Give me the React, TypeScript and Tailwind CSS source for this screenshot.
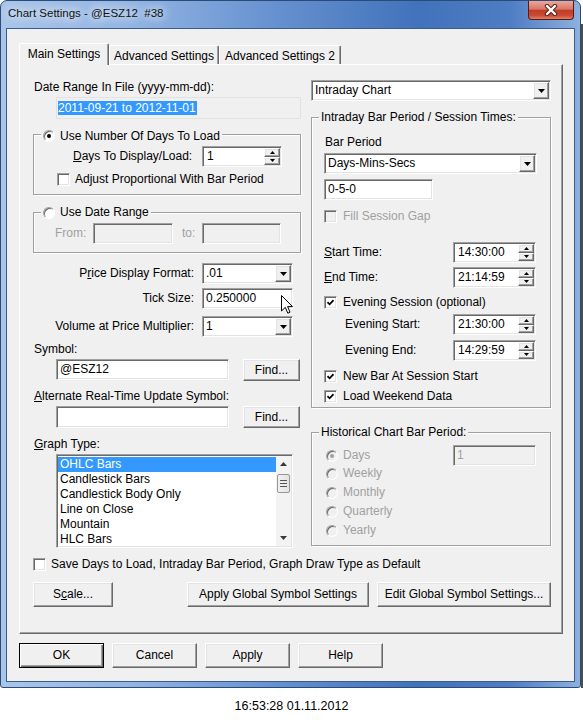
import React from 'react';

// classic 3D edges
const sunken =
    'border border-t-[#a0a0a0] border-l-[#a0a0a0] border-r-white border-b-white shadow-[inset_1px_1px_0_#696969,inset_-1px_-1px_0_#e3e3e3]';
const raised =
    'border border-t-white border-l-white border-r-[#696969] border-b-[#696969] shadow-[inset_-1px_-1px_0_#a0a0a0,inset_1px_1px_0_#e3e3e3]';

const Tri = ({ up, w = 7, h = 4, color = '#000' }: { up?: boolean; w?: number; h?: number; color?: string }) => (
    <svg width={w} height={h} viewBox={`0 0 ${w} ${h}`}>
        <path d={up ? `M0 ${h}H${w}L${w / 2} 0Z` : `M0 0H${w}L${w / 2} ${h}Z`} fill={color} />
    </svg>
);

const Select = ({ value, className = '' }: { value: string; className?: string }) => (
    <div className={`${sunken} bg-white h-[21px] flex p-[1px] ${className}`}>
        <div className="flex-1 pl-[2px] flex items-center">{value}</div>
        <div className={`${raised} w-[16px] bg-[#f0f0f0] flex items-center justify-center`}>
            <Tri />
        </div>
    </div>
);

const Spin = ({ value, className = '' }: { value: string; className?: string }) => (
    <div className={`${sunken} bg-white h-[21px] flex p-[1px] ${className}`}>
        <div className="flex-1 pl-[3px] flex items-center">{value}</div>
        <div className="w-[16px] flex flex-col">
            <div className={`${raised} flex-1 bg-[#f0f0f0] flex items-center justify-center`}>
                <Tri up w={5} h={3} />
            </div>
            <div className={`${raised} flex-1 bg-[#f0f0f0] flex items-center justify-center`}>
                <Tri w={5} h={3} />
            </div>
        </div>
    </div>
);

const Edit = ({
    value = '',
    disabled,
    tall,
    className = '',
}: {
    value?: string;
    disabled?: boolean;
    tall?: boolean;
    className?: string;
}) => (
    <div
        className={`${sunken} ${tall ? 'h-[22px]' : 'h-[21px]'} flex items-center pl-[3px] ${disabled ? 'bg-[#f0f0f0] text-[#a0a0a0]' : 'bg-white'} ${className}`}
    >
        {value}
    </div>
);

const Check = ({ checked, disabled }: { checked?: boolean; disabled?: boolean }) => (
    <span
        className={`${sunken} w-[13px] h-[13px] shrink-0 flex items-center justify-center ${disabled ? 'bg-[#f0f0f0]' : 'bg-white'}`}
    >
        {checked && (
            <svg width="7" height="7" viewBox="0 0 7 7">
                <path d="M0.5 3.2L2.6 5.3L6.5 1.2" stroke="#000" strokeWidth="1.7" fill="none" />
            </svg>
        )}
    </span>
);

const Radio = ({ checked, disabled }: { checked?: boolean; disabled?: boolean }) => (
    <span
        className={`w-[12px] h-[12px] rounded-full shrink-0 flex items-center justify-center border border-t-[#a0a0a0] border-l-[#a0a0a0] border-r-white border-b-white shadow-[inset_1px_1px_0_#696969] ${disabled ? 'bg-[#f0f0f0]' : 'bg-white'}`}
    >
        {checked && <span className={`w-[4px] h-[4px] rounded-full ${disabled ? 'bg-[#a0a0a0]' : 'bg-black'}`} />}
    </span>
);

const Btn = ({ children, small, className = '' }: { children: React.ReactNode; small?: boolean; className?: string }) => (
    <div
        className={`${raised} bg-[#f0f0f0] ${small ? 'h-[22px]' : 'h-[25px]'} flex items-center justify-center ${className}`}
    >
        {children}
    </div>
);

const Group = ({ legend, className = '', children }: { legend: React.ReactNode; className?: string; children: React.ReactNode }) => (
    <fieldset className={`border border-[#a0a0a0] shadow-[inset_1px_1px_0_#fff,1px_1px_0_#fff] ${className}`}>
        <legend className="ml-[7px] px-[2px] bg-[#f0f0f0] h-[15px] leading-[15px]">
            <span className="inline-flex items-center gap-[5px]">{legend}</span>
        </legend>
        {children}
    </fieldset>
);

const CheckRow = ({ label, checked, disabled, gap = 'gap-[5px]', className = '' }: { label: string; checked?: boolean; disabled?: boolean; gap?: string; className?: string }) => (
    <div className={`h-[15px] flex items-center ${gap} ${className}`}>
        <Check checked={checked} disabled={disabled} />
        <span className={disabled ? 'text-[#a0a0a0]' : ''}>{label}</span>
    </div>
);

const RadioRow = ({ label, checked, className = '' }: { label: string; checked?: boolean; className?: string }) => (
    <div className={`h-[15px] flex items-center gap-[5px] text-[#a0a0a0] ${className}`}>
        <Radio checked={checked} disabled />
        <span>{label}</span>
    </div>
);

const graphTypes = ['OHLC Bars', 'Candlestick Bars', 'Candlestick Body Only', 'Line on Close', 'Mountain', 'HLC Bars'];

const App = () => {
    return (
        <div className="relative w-[583px] h-[723px] bg-white overflow-hidden font-['Liberation_Sans',Arial,sans-serif] text-[12px] leading-[15px] text-black">
            <div className="flex">
                {/* window frame */}
                <div className="w-[581px] h-[688px] rounded-t-[7px] rounded-b-[3px] border border-[#2c4a76] bg-[linear-gradient(90deg,#a9c5ea_0%,#93b5e3_22%,#6590cf_48%,#4272bb_72%,#4f7dc3_88%,#8db0df_100%)] flex flex-col">
                    <div className="h-[27px] flex items-start">
                        <div className="pl-[7px] pt-[5px] text-[11.5px] text-[#111] [text-shadow:0_0_8px_#fff,0_0_12px_#fff]">
                            Chart Settings - @ESZ12&nbsp;&nbsp;#38
                        </div>
                        <div className="flex-1" />
                        <div className="mr-[6px] w-[46px] h-[19px] rounded-b-[4px] border border-t-0 border-[#5c1a12] bg-[linear-gradient(#eaa89c,#d87867_45%,#c13d27_52%,#c94a33_80%,#e08366)] flex items-center justify-center">
                            <svg width="14" height="12" viewBox="0 0 14 12">
                                <path d="M3 2L11 10M11 2L3 10" stroke="#5a2218" strokeWidth="4.4" strokeLinecap="round" />
                                <path d="M3 2L11 10M11 2L3 10" stroke="#fff" strokeWidth="2.4" strokeLinecap="round" />
                            </svg>
                        </div>
                    </div>
                    {/* client area */}
                    <div className="mx-[5px] h-[654px] bg-[#f0f0f0] border border-[#3b5c8c] flex flex-col">
                        {/* tabs */}
                        <div className="mt-[14px] ml-[12px] h-[21px] flex items-end">
                            <div className="relative z-10 -mb-[1px] w-[90px] h-[22px] bg-[#f0f0f0] rounded-t-[2px] border border-b-0 border-t-white border-l-white border-r-[#696969] shadow-[inset_-1px_0_0_#a0a0a0] flex justify-center pt-[3px]">
                                Main Settings
                            </div>
                            <div className="w-[110px] h-[19px] rounded-t-[2px] border border-b-0 border-t-white border-l-white border-r-[#696969] shadow-[inset_-1px_0_0_#a0a0a0] flex justify-center pt-[3px]">
                                Advanced Settings
                            </div>
                            <div className="w-[122px] h-[19px] rounded-t-[2px] border border-b-0 border-t-white border-l-white border-r-[#696969] shadow-[inset_-1px_0_0_#a0a0a0] flex justify-center pt-[3px]">
                                Advanced Settings 2
                            </div>
                        </div>
                        {/* tab page */}
                        <div className="ml-[12px] w-[544px] h-[570px] border border-t-white border-l-white border-r-[#696969] border-b-[#696969] shadow-[inset_-1px_-1px_0_#a0a0a0] pl-[13px] pt-[15px]">
                            <div className="flex gap-[10px] items-start">
                                {/* left column */}
                                <div className="w-[268px] flex flex-col">
                                    <div className="ml-[1px] h-[15px]">Date Range In File (yyyy-mm-dd):</div>
                                    <div className="mt-[2px] ml-[23px] w-[245px] h-[22px] border border-[#e2e2e2] bg-[#f0f0f0] flex items-center pl-[1px]">
                                        <span className="bg-[#3399ff] text-white leading-[14px] pr-[1px]">2011-09-21 to 2012-11-01</span>
                                    </div>

                                    <Group
                                        className="mt-[8px] w-[268px] pb-[7px]"
                                        legend={
                                            <>
                                                <Radio checked />
                                                Use Number Of Days To Load
                                            </>
                                        }
                                    >
                                        <div className="mt-[4px] h-[21px] flex items-center">
                                            <span className="ml-[39px] w-[129px]">
                                                <u>D</u>ays To Display/Load:
                                            </span>
                                            <Spin value="1" className="w-[80px]" />
                                        </div>
                                        <CheckRow className="mt-[5px] ml-[23px]" label="Adjust Proportional With Bar Period" />
                                    </Group>

                                    <Group
                                        className="mt-[10px] w-[268px] pb-[8px]"
                                        legend={
                                            <>
                                                <Radio />
                                                Use Date Range
                                            </>
                                        }
                                    >
                                        <div className="mt-[3px] h-[21px] flex items-center text-[#a0a0a0]">
                                            <span className="ml-[21px] w-[38px]">From:</span>
                                            <Edit disabled className="w-[80px]" />
                                            <span className="ml-[9px] w-[20px]">to:</span>
                                            <Edit disabled className="w-[79px]" />
                                        </div>
                                    </Group>

                                    <div className="mt-[10px] h-[21px] flex items-center">
                                        <span className="w-[161px] text-right">
                                            P<u>r</u>ice Display Format:
                                        </span>
                                        <Select value=".01" className="ml-[8px] w-[91px]" />
                                    </div>
                                    <div className="mt-[4px] h-[21px] flex items-center">
                                        <span className="w-[161px] text-right">Tick Size:</span>
                                        <Edit value="0.250000" className="ml-[8px] w-[91px]" />
                                    </div>
                                    <div className="mt-[7px] h-[21px] flex items-center">
                                        <span className="w-[161px] text-right">Volume at Price Multiplier:</span>
                                        <Select value="1" className="ml-[8px] w-[91px]" />
                                    </div>

                                    <div className="mt-[5px] ml-[1px] h-[15px]">Symbol:</div>
                                    <div className="mt-[2px] flex items-start">
                                        <Edit value="@ESZ12" className="ml-[23px] w-[173px]" />
                                        <Btn small className="ml-[14px] w-[57px]">
                                            Find...
                                        </Btn>
                                    </div>

                                    <div className="mt-[8px] ml-[1px] h-[15px]">
                                        <u>A</u>lternate Real-Time Update Symbol:
                                    </div>
                                    <div className="mt-[2px] flex items-start">
                                        <Edit tall className="ml-[23px] w-[173px]" />
                                        <Btn small className="ml-[14px] w-[57px]">
                                            Find...
                                        </Btn>
                                    </div>

                                    <div className="mt-[9px] ml-[1px] h-[15px]">
                                        <u>G</u>raph Type:
                                    </div>
                                    <div className={`${sunken} mt-[2px] ml-[23px] w-[237px] h-[94px] bg-white flex p-[1px]`}>
                                        <div className="flex-1 pt-[1px]">
                                            {graphTypes.map((t, i) => (
                                                <div
                                                    key={t}
                                                    className={`h-[15px] pl-[2px] ${i === 0 ? 'bg-[#3399ff] text-white' : ''}`}
                                                >
                                                    {t}
                                                </div>
                                            ))}
                                        </div>
                                        {/* scrollbar */}
                                        <div className="w-[15px] bg-[#f3f3f3] flex flex-col items-center">
                                            <div className="h-[16px] flex items-center justify-center">
                                                <Tri up w={7} h={4} color="#3a3a3a" />
                                            </div>
                                            <div className="mt-[2px] w-[13px] h-[19px] rounded-[2px] border border-[#979797] bg-[linear-gradient(90deg,#f2f2f2,#e2e2e2)] flex flex-col items-center justify-center gap-[2px]">
                                                <span className="w-[7px] h-[1px] bg-[#555]" />
                                                <span className="w-[7px] h-[1px] bg-[#555]" />
                                                <span className="w-[7px] h-[1px] bg-[#555]" />
                                            </div>
                                            <div className="flex-1" />
                                            <div className="h-[16px] flex items-center justify-center">
                                                <Tri w={7} h={4} color="#3a3a3a" />
                                            </div>
                                        </div>
                                    </div>
                                </div>

                                {/* right column */}
                                <div className="w-[240px] flex flex-col">
                                    <Select value="Intraday Chart" className="w-[240px]" />

                                    <Group className="mt-[9px] w-[240px] pb-[3px]" legend="Intraday Bar Period / Session Times:">
                                        <div className="mt-[10px] ml-[13px] h-[15px]">Bar Period</div>
                                        <Select value="Days-Mins-Secs" className="mt-[3px] ml-[12px] w-[213px]" />
                                        <Edit value="0-5-0" className="mt-[5px] ml-[12px] w-[109px]" />
                                        <CheckRow className="mt-[9px] ml-[12px]" gap="gap-[6px]" label="Fill Session Gap" disabled />
                                        <div className="mt-[18px] h-[21px] flex items-center">
                                            <span className="ml-[12px] w-[129px]">
                                                <u>S</u>tart Time:
                                            </span>
                                            <Spin value="14:30:00" className="w-[83px]" />
                                        </div>
                                        <div className="mt-[4px] h-[21px] flex items-center">
                                            <span className="ml-[12px] w-[129px]">
                                                <u>E</u>nd Time:
                                            </span>
                                            <Spin value="21:14:59" className="w-[83px]" />
                                        </div>
                                        <CheckRow className="mt-[7px] ml-[12px]" gap="gap-[6px]" label="Evening Session (optional)" checked />
                                        <div className="mt-[4px] h-[21px] flex items-center">
                                            <span className="ml-[33px] w-[108px]">Evening Start:</span>
                                            <Spin value="21:30:00" className="w-[83px]" />
                                        </div>
                                        <div className="mt-[5px] h-[21px] flex items-center">
                                            <span className="ml-[33px] w-[108px]">Evening End:</span>
                                            <Spin value="14:29:59" className="w-[83px]" />
                                        </div>
                                        <CheckRow className="mt-[8px] ml-[12px]" gap="gap-[6px]" label="New Bar At Session Start" checked />
                                        <CheckRow className="mt-[5px] ml-[12px]" gap="gap-[6px]" label="Load Weekend Data" checked />
                                    </Group>

                                    <Group className="mt-[17px] w-[240px] pb-[7px]" legend="Historical Chart Bar Period:">
                                        <div className="mt-[5px] h-[21px] flex items-center">
                                            <div className="w-[141px] pl-[14px]">
                                                <RadioRow label="Days" checked />
                                            </div>
                                            <Edit value="1" disabled className="w-[83px]" />
                                        </div>
                                        <RadioRow className="ml-[14px]" label="Weekly" />
                                        <RadioRow className="mt-[4px] ml-[14px]" label="Monthly" />
                                        <RadioRow className="mt-[4px] ml-[14px]" label="Quarterly" />
                                        <RadioRow className="mt-[4px] ml-[14px]" label="Yearly" />
                                    </Group>
                                </div>
                            </div>

                            <CheckRow className="mt-[9px]" label="Save Days to Load, Intraday Bar Period, Graph Draw Type as Default" />
                            <div className="mt-[10px] flex">
                                <Btn className="w-[80px]">
                                    S<u>c</u>ale...
                                </Btn>
                                <Btn className="ml-[74px] w-[182px]">Apply Global Symbol Settings</Btn>
                                <Btn className="ml-[8px] w-[174px]">Edit Global Symbol Settings...</Btn>
                            </div>
                        </div>

                        {/* dialog buttons */}
                        <div className="mt-[9px] ml-[12px] flex gap-[8px]">
                            <div className="w-[85px] h-[25px] border border-black bg-[#f0f0f0] shadow-[inset_1px_1px_0_#fff,inset_-1px_-1px_0_#696969,inset_-2px_-2px_0_#a0a0a0] flex items-center justify-center">
                                OK
                            </div>
                            <Btn className="w-[85px]">Cancel</Btn>
                            <Btn className="w-[85px]">Apply</Btn>
                            <Btn className="w-[85px]">Help</Btn>
                        </div>
                    </div>
                </div>
                <div className="mt-[24px] w-[2px] h-[664px] bg-[#4d4d4d]" />
            </div>

            <div className="mt-[11px] text-center text-[12.5px]">16:53:28 01.11.2012</div>

            {/* mouse pointer */}
            <svg className="absolute left-[281px] top-[295px]" width="12" height="19" viewBox="0 0 12 19">
                <path
                    d="M0.5 0.5V16L4.3 12.4L6.8 18.2L9 17.2L6.6 11.6H11.5Z"
                    fill="#fff"
                    stroke="#000"
                    strokeWidth="1"
                    strokeLinejoin="round"
                />
            </svg>
        </div>
    );
};

export default App;
